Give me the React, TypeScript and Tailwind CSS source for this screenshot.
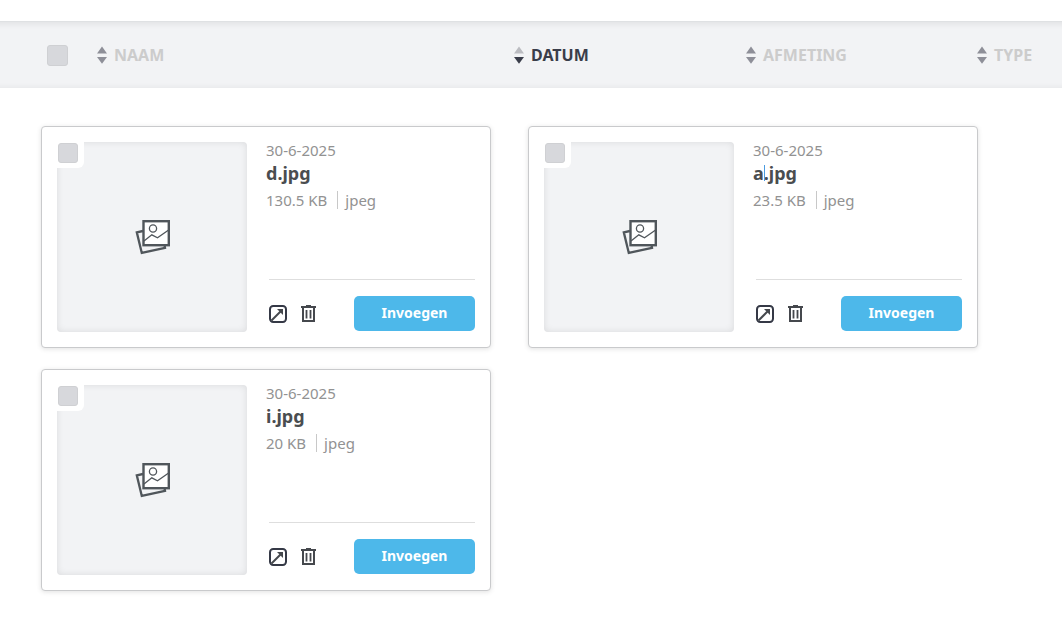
import { clsx } from "clsx";

interface Asset {
  name: string;
  extension: string;
  date: string;
  size: string;
  type: string;
  editing?: boolean;
}

interface Column {
  label: string;
  active?: boolean;
}

const COLUMNS: Column[] = [
  { label: "NAAM" },
  { label: "DATUM", active: true },
  { label: "AFMETING" },
  { label: "TYPE" },
];

const ASSETS: Asset[] = [
  { name: "d", extension: ".jpg", date: "30-6-2025", size: "130.5 KB", type: "jpeg" },
  { name: "a", extension: ".jpg", date: "30-6-2025", size: "23.5 KB", type: "jpeg", editing: true },
  { name: "i", extension: ".jpg", date: "30-6-2025", size: "20 KB", type: "jpeg" },
];

function SortIcon({ active }: { active?: boolean }) {
  return (
    <svg width="10" height="18" viewBox="0 0 10 18" aria-hidden="true">
      <path d="M5 0.5L10 7.5H0Z" fill={active ? "#bbbcc1" : "#8e8f98"} />
      <path d="M0 11H10L5 17.8Z" fill={active ? "#3a3d4a" : "#8e8f98"} />
    </svg>
  );
}

function PicturesIcon() {
  return (
    <svg width="36" height="36" viewBox="0 0 36 36" fill="none" stroke="#50565b" aria-hidden="true">
      <path d="M9 12L2.8 13.3L7.8 33.9L31 28.8L30.5 26" strokeWidth="2.3" />
      <rect x="9.5" y="2.2" width="25.3" height="24" fill="#fff" strokeWidth="2.4" />
      <circle cx="19" cy="9.5" r="3.6" strokeWidth="1.3" />
      <path d="M10 22L17.8 15.8L23.5 18.8L35 10.8" strokeWidth="1.3" />
    </svg>
  );
}

function OpenIcon() {
  return (
    <svg width="18" height="18" viewBox="0 0 18 18" fill="none" aria-hidden="true">
      <rect x="1" y="1" width="16" height="16" rx="3.2" stroke="#353946" strokeWidth="2" />
      <path d="M2.5 15.5L11.5 6.5" stroke="#45484d" strokeWidth="2" />
      <path d="M8 4H14V10Z" fill="#45484d" />
    </svg>
  );
}

function TrashIcon() {
  return (
    <svg width="15" height="18" viewBox="0 0 15 18" fill="none" stroke="#45484d" aria-hidden="true">
      <path d="M5 0.5H10" strokeWidth="1" />
      <path d="M0 2H15" strokeWidth="2" />
      <path d="M2 2V16H13V2" strokeWidth="2" />
      <path d="M5.5 5V13.5M9.5 5V13.5" strokeWidth="1.8" />
    </svg>
  );
}

function SelectBox({ label, className }: { label: string; className?: string }) {
  return (
    <input
      type="checkbox"
      aria-label={label}
      className={clsx(
        "block shrink-0 appearance-none rounded-[3px] border border-[#cfd0d3] bg-[#d7d8dc] checked:bg-[#4db8ea]",
        className
      )}
    />
  );
}

function ListHeader() {
  return (
    <header className="flex h-[67px] items-center border-t border-[#dfe1e3] bg-[#f2f3f5] pl-[47px] shadow-[inset_0_8px_5px_-5px_rgba(0,0,0,0.06),inset_0_-6px_4px_-4px_rgba(0,0,0,0.04)]">
      <SelectBox label="Alles selecteren" className="h-[21px] w-[21px]" />
      <div className="ml-[29px] grid flex-1 grid-cols-[417fr_232fr_231fr_85fr]">
        {COLUMNS.map((column) => (
          <button
            key={column.label}
            type="button"
            className={clsx(
              "flex items-center gap-[7px] pb-px text-base leading-5 font-bold",
              column.active ? "text-[#3a3d4a]" : "text-[#cccccc]"
            )}
          >
            <SortIcon active={column.active} />
            {column.label}
          </button>
        ))}
      </div>
    </header>
  );
}

function AssetCard({ asset }: { asset: Asset }) {
  const fileName = asset.name + asset.extension;

  return (
    <article className="flex gap-[19px] rounded-[4px] border border-[#c9cacc] bg-white p-[15px] shadow-[0_1px_5px_rgba(0,0,0,0.12)]">
      {/* Thumbnail with the select box cut out of its corner */}
      <div className="relative flex h-[190px] w-[190px] shrink-0 items-center justify-center rounded-[4px] bg-[#f2f3f5] shadow-[inset_0_0_7px_rgba(0,0,0,0.1)]">
        <PicturesIcon />
        <div className="absolute top-0 left-0 h-[26px] w-[27px] rounded-br-[6px] bg-white p-px">
          <SelectBox label={`Selecteer ${fileName}`} className="h-5 w-5" />
        </div>
      </div>

      <div className="flex min-w-0 flex-1 flex-col">
        <div className="text-[15px] leading-4 text-[#929292]">{asset.date}</div>
        <h2 className="text-lg leading-[30px] font-bold text-[#4a4d50]">
          <span className="relative">
            {asset.name}
            {asset.editing && (
              <span className="absolute top-1 -right-px h-4 w-px bg-[#4a9be0]" />
            )}
          </span>
          {asset.extension}
        </h2>
        <div className="flex h-6 items-center text-[15px] text-[#929292]">
          <span>{asset.size}</span>
          <span className="ml-[10px] border-l border-[#c8c8c8] pl-[7px] leading-[18px]">
            {asset.type}
          </span>
        </div>

        <div className="mt-auto ml-[3px] flex items-center border-t border-[#dedede] pt-4 pb-px">
          <button type="button" aria-label={`Open ${fileName}`}>
            <OpenIcon />
          </button>
          <button type="button" aria-label={`Verwijder ${fileName}`} className="ml-[14px]">
            <TrashIcon />
          </button>
          <button
            type="button"
            className="ml-auto h-[35px] w-[121px] rounded-[5px] bg-[#4db8ea] pb-0.5 text-sm font-bold text-white hover:bg-[#3aa9dd]"
          >
            Invoegen
          </button>
        </div>
      </div>
    </article>
  );
}

export default function App() {
  return (
    <div className="min-h-screen bg-white pt-[21px] font-['Noto_Sans',sans-serif]">
      <ListHeader />
      <main className="grid grid-cols-2 gap-x-[37px] gap-y-[21px] pt-[38px] pr-[84px] pb-7 pl-[41px]">
        {ASSETS.map((asset) => (
          <AssetCard key={asset.name} asset={asset} />
        ))}
      </main>
    </div>
  );
}
